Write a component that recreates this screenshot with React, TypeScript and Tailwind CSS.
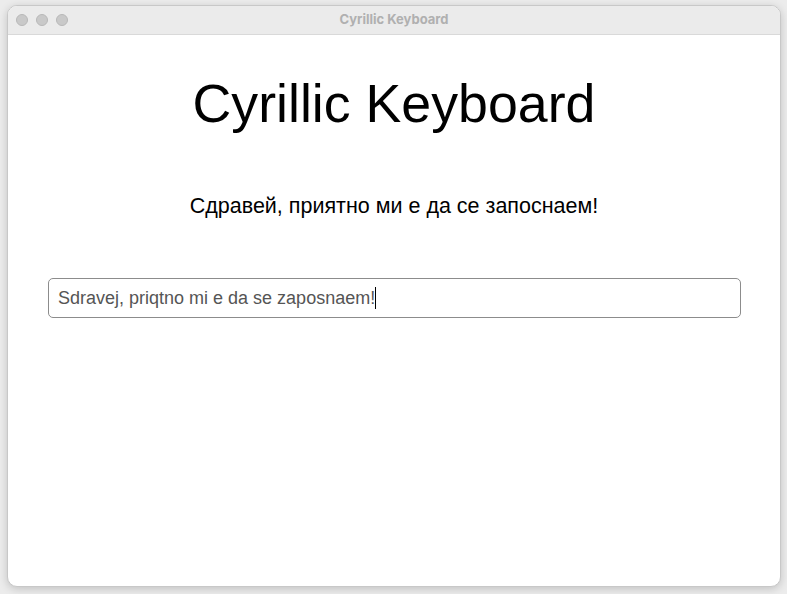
import React from 'react';

const Dot = () => <div className="w-[12px] h-[12px] rounded-full bg-[#c9c9c9] border border-[#b8b8b8]" />;

export default function App() {
  return (
    <div className="w-[787px] h-[594px] bg-[#ececec] pt-[5px] pl-[7px] font-['Liberation_Sans',Arial,sans-serif]">
      <div className="w-[774px] h-[582px] rounded-[10px] bg-white border border-[#c8c8c8] overflow-hidden shadow-[0_2px_8px_rgba(0,0,0,0.18)] flex flex-col">
        <div className="relative h-[29px] shrink-0 bg-[#ebebeb] border-b border-[#d9d9d9] flex items-center">
          <div className="flex gap-[8px] pl-[8px]">
            <Dot />
            <Dot />
            <Dot />
          </div>
          <div className="absolute inset-0 flex items-center justify-center text-[13px] font-bold text-[#b0b0b0] font-['Inter',sans-serif]">
            Cyrillic Keyboard
          </div>
        </div>
        <div className="flex flex-col items-center">
          <h1 className="mt-[42px] text-[53.7px] leading-none text-black">Cyrillic Keyboard</h1>
          <p className="mt-[65px] text-[21.5px] leading-none text-black">Сдравей, приятно ми е да се запоснаем!</p>
          <div className="self-stretch pl-[40px] pr-[39px] mt-[61px]">
            <div className="h-[40px] rounded-[5px] border border-[#8c8c8c] flex items-center pl-[9px] text-[18px] text-[#555]">
              <span>Sdravej, priqtno mi e da se zaposnaem!</span>
              <span className="w-px h-[22px] bg-black" />
            </div>
          </div>
        </div>
      </div>
    </div>
  );
}
